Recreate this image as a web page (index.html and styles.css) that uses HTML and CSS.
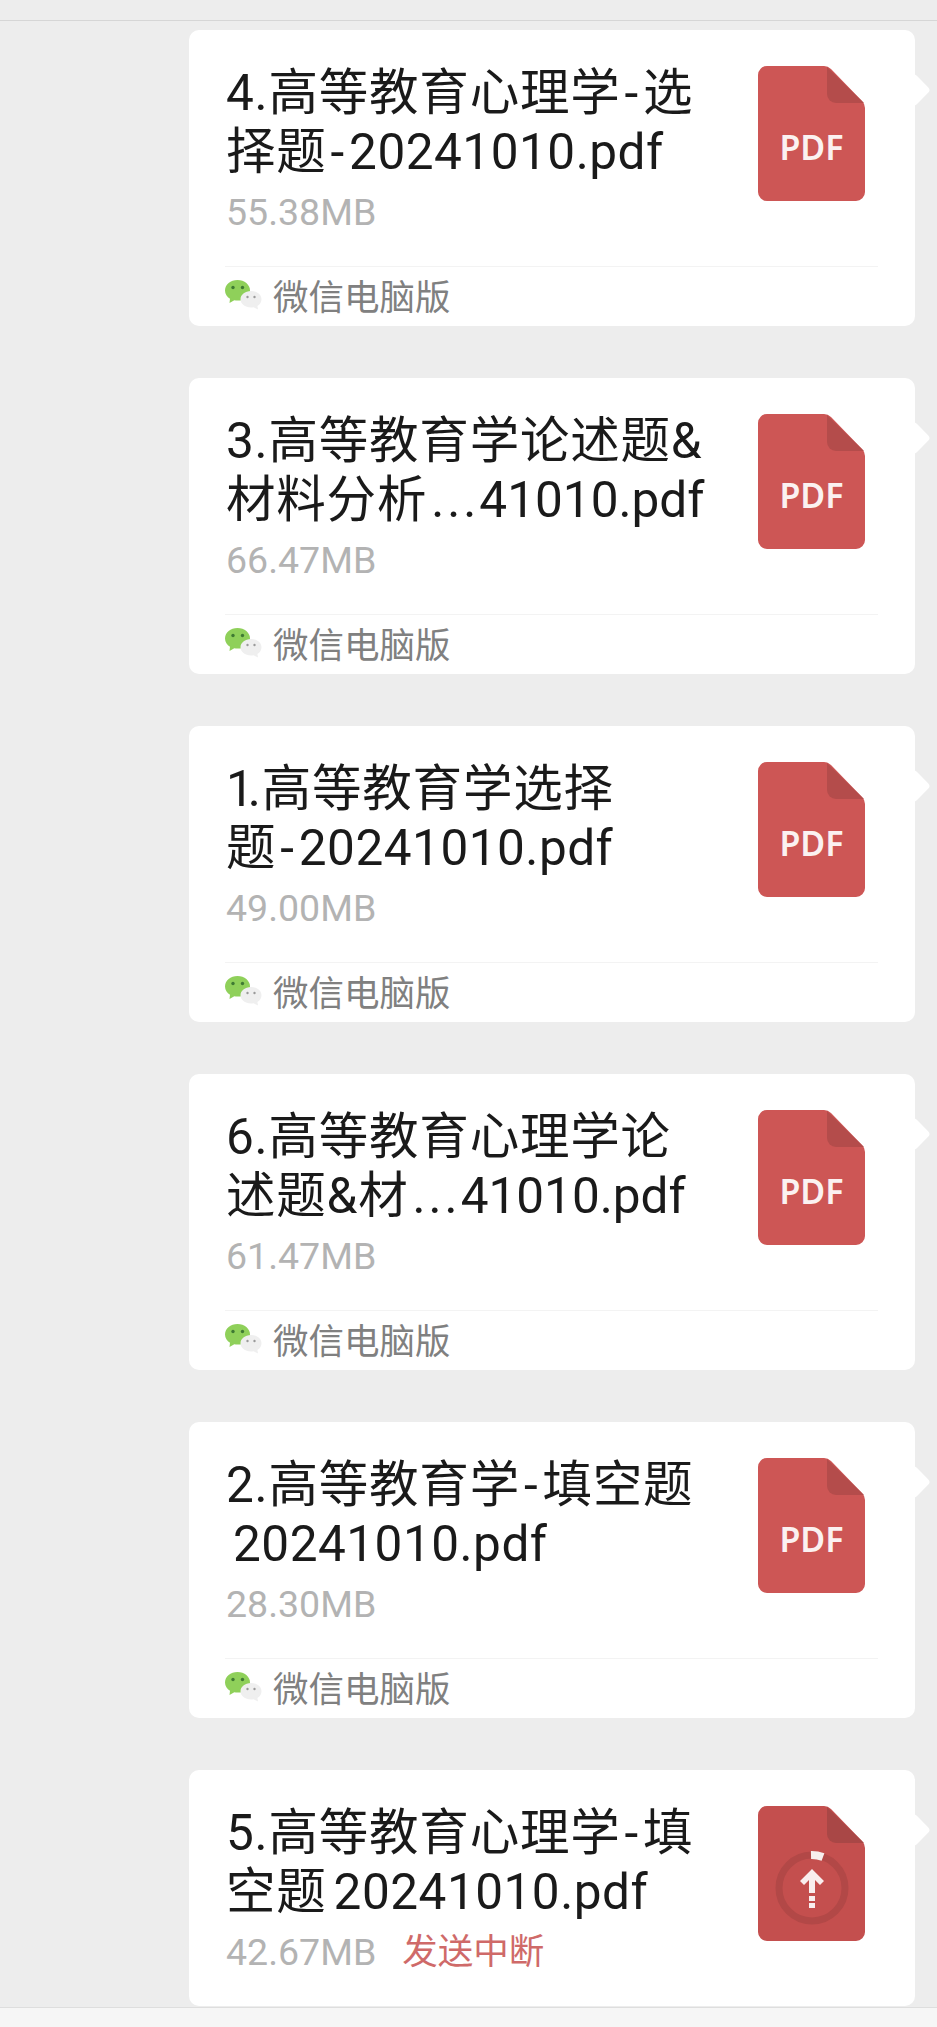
FILE: index.html
```html
<!DOCTYPE html>
<html lang="zh-CN">
<head>
    <meta charset="UTF-8">
    <meta name="viewport" content="width=device-width, initial-scale=1.0">
    <title>文件消息</title>
    <link rel="stylesheet" href="styles.css">
</head>
<body>
    <svg class="icon-defs" aria-hidden="true">
        <symbol id="doc-pdf" viewBox="0 0 107 135">
            <path d="M9 0H66q4 0 7 3L104 35q3 3 3 7V126a9 9 0 0 1-9 9H9a9 9 0 0 1-9-9V9a9 9 0 0 1 9-9Z" fill="#cd5655"/>
            <path d="M69 1 106 37H78a9 9 0 0 1-9-9Z" fill="#b44c4b"/>
        </symbol>
        <symbol id="wechat-logo" viewBox="0 0 38 32">
            <path d="M13.5 2C6.500 2 1 6.600 1 12.400c0 3.500 2 6.500 5 8.400L5.500 25l4.800-2.800c1 .2 2.100.4 3.200.4 7 0 12.500-4.600 12.500-10.200S20.500 2 13.500 2Z" fill="#8fd05a"/>
            <circle cx="9" cy="9.500" r="1.700" fill="#3f7a33"/>
            <circle cx="18.500" cy="9.500" r="1.700" fill="#3f7a33"/>
            <path d="M27 13c-6 0-10.500 3.700-10.500 8.300S21 29.500 27 29.500c.9 0 1.800-.1 2.600-.3l4.400 2.300-.6-3.500c2.700-1.500 4.100-4 4.100-6.700C37.500 16.700 33 13 27 13Z" fill="#efefef"/>
            <circle cx="23.500" cy="19" r="1.200" fill="#9a9a9a"/>
            <circle cx="30.500" cy="19" r="1.200" fill="#9a9a9a"/>
        </symbol>
    </svg>

    <div class="top-bar"></div>

    <div class="message-list">
        <div class="file-card">
            <div class="file-main">
                <div class="file-info">
                    <div class="file-name">4.高等教育心理学<span class="dash">-</span>选<br>择题<span class="dash">-</span><span class="name-tail">20241010.pdf</span></div>
                    <div class="file-meta"><span class="file-size">55.38MB</span></div>
                </div>
                <div class="file-icon">
                    <svg width="107" height="135"><use href="#doc-pdf"/></svg>
                    <span class="pdf-label">PDF</span>
                </div>
            </div>
            <div class="file-source">
                <svg class="source-logo" width="38" height="32"><use href="#wechat-logo"/></svg>
                <span>微信电脑版</span>
            </div>
        </div>

        <div class="file-card">
            <div class="file-main">
                <div class="file-info">
                    <div class="file-name">3.高等教育学论述题&amp;<br>材料分析<span class="ellipsis">...</span><span class="short-tail">41010.pdf</span></div>
                    <div class="file-meta"><span class="file-size">66.47MB</span></div>
                </div>
                <div class="file-icon">
                    <svg width="107" height="135"><use href="#doc-pdf"/></svg>
                    <span class="pdf-label">PDF</span>
                </div>
            </div>
            <div class="file-source">
                <svg class="source-logo" width="38" height="32"><use href="#wechat-logo"/></svg>
                <span>微信电脑版</span>
            </div>
        </div>

        <div class="file-card">
            <div class="file-main">
                <div class="file-info">
                    <div class="file-name"><span class="narrow-one">1</span>.高等教育学选择<br>题<span class="dash">-</span><span class="name-tail">20241010.pdf</span></div>
                    <div class="file-meta"><span class="file-size">49.00MB</span></div>
                </div>
                <div class="file-icon">
                    <svg width="107" height="135"><use href="#doc-pdf"/></svg>
                    <span class="pdf-label">PDF</span>
                </div>
            </div>
            <div class="file-source">
                <svg class="source-logo" width="38" height="32"><use href="#wechat-logo"/></svg>
                <span>微信电脑版</span>
            </div>
        </div>

        <div class="file-card">
            <div class="file-main">
                <div class="file-info">
                    <div class="file-name">6.高等教育心理学论<br>述题&amp;材<span class="ellipsis">...</span><span class="short-tail">41010.pdf</span></div>
                    <div class="file-meta"><span class="file-size">61.47MB</span></div>
                </div>
                <div class="file-icon">
                    <svg width="107" height="135"><use href="#doc-pdf"/></svg>
                    <span class="pdf-label">PDF</span>
                </div>
            </div>
            <div class="file-source">
                <svg class="source-logo" width="38" height="32"><use href="#wechat-logo"/></svg>
                <span>微信电脑版</span>
            </div>
        </div>

        <div class="file-card">
            <div class="file-main">
                <div class="file-info">
                    <div class="file-name">2.高等教育学<span class="dash">-</span>填空题<br><span class="name-tail name-gap">20241010.pdf</span></div>
                    <div class="file-meta"><span class="file-size">28.30MB</span></div>
                </div>
                <div class="file-icon">
                    <svg width="107" height="135"><use href="#doc-pdf"/></svg>
                    <span class="pdf-label">PDF</span>
                </div>
            </div>
            <div class="file-source">
                <svg class="source-logo" width="38" height="32"><use href="#wechat-logo"/></svg>
                <span>微信电脑版</span>
            </div>
        </div>

        <div class="file-card">
            <div class="file-main">
                <div class="file-info">
                    <div class="file-name">5.高等教育心理学<span class="dash">-</span>填<br>空题<span class="name-tail name-gap">20241010.pdf</span></div>
                    <div class="file-meta">
                        <span class="file-size">42.67MB</span>
                        <span class="file-failed">发送中断</span>
                    </div>
                </div>
                <div class="file-icon">
                    <svg width="107" height="135" viewBox="0 0 107 135">
                        <path d="M9 0H66q4 0 7 3L104 35q3 3 3 7V126a9 9 0 0 1-9 9H9a9 9 0 0 1-9-9V9a9 9 0 0 1 9-9Z" fill="#c44f4e"/>
                        <path d="M69 1 106 37H78a9 9 0 0 1-9-9Z" fill="#a94746"/>
                        <circle cx="54" cy="82" r="33" fill="none" stroke="#b24847" stroke-width="7"/>
                        <path d="M53 49A33 33 0 0 1 65 51" fill="none" stroke="#f7eeee" stroke-width="8"/>
                        <path d="M54 63 42 75 46 79 51 74V87H57V74L62 79 66 75Z" fill="#f9eeee"/>
                        <rect x="51" y="90" width="6" height="5" fill="#f9eeee"/>
                        <rect x="51" y="97" width="6" height="5" fill="#f9eeee"/>
                    </svg>
                </div>
            </div>
        </div>
    </div>

    <div class="bottom-bar"></div>
</body>
</html>
```

FILE: styles.css
```css
html, body {
    margin: 0;
    height: 100%;
}
body {
    display: flex;
    flex-direction: column;
    background-color: #ededed;
    font-family: Roboto, "Noto Sans CJK SC", sans-serif;
    overflow: hidden;
}
.icon-defs {
    width: 0;
    height: 0;
    position: absolute;
}
.top-bar {
    height: 20px;
    flex-shrink: 0;
    border-bottom: 1px solid #d6d6d6;
}
.message-list {
    display: flex;
    flex-direction: column;
    gap: 52px;
    padding: 9px 22px 0 189px;
}
.file-card {
    position: relative;
    background: #fff;
    border-radius: 10px;
}
/* bubble tail */
.file-card::after {
    content: "";
    position: absolute;
    top: 48px;
    right: -11px;
    width: 24px;
    height: 24px;
    background: #fff;
    border-radius: 4px;
    transform: rotate(45deg);
}
.file-main {
    display: flex;
    justify-content: space-between;
    padding: 36px 50px 0 37px;
    height: 200px;
}
.file-name {
    margin-top: -2px;
    font-size: 49.5px;
    letter-spacing: 0.8px;
    line-height: 59px;
    color: #1a1a1a;
    white-space: nowrap;
}
.dash {
    margin: 0 4px;
}
.ellipsis {
    margin-left: 4px;
    letter-spacing: 3px;
}
.narrow-one {
    letter-spacing: -6px;
}
.name-tail {
    letter-spacing: 0.5px;
}
.short-tail {
    letter-spacing: 0;
}
.name-gap {
    margin-left: 7px;
}
.file-meta {
    display: flex;
    gap: 27px;
    align-items: center;
    margin-top: 8px;
    font-size: 37.5px;
    line-height: 44px;
}
.file-size {
    color: #b3b3b3;
}
.file-failed {
    font-size: 35.5px;
    color: #cf6a69;
    margin-left: -1px;
}
.file-icon {
    position: relative;
    width: 107px;
    height: 135px;
}
.pdf-label {
    position: absolute;
    left: 0;
    right: 0;
    top: 61px;
    text-align: center;
    font-family: "Noto Sans", sans-serif;
    font-weight: 600;
    font-size: 34px;
    line-height: 40px;
    color: #fbf1f1;
}
.file-source {
    display: flex;
    align-items: center;
    gap: 11px;
    height: 60px;
    margin: 0 37px 0 36px;
    padding-bottom: 5px;
    border-top: 1px solid #f3f3f3;
    box-sizing: border-box;
    font-size: 35.5px;
    color: #808080;
}
.source-logo {
    margin-left: -1px;
}
.bottom-bar {
    flex: 1;
    margin-top: 1px;
    border-top: 1px solid #dedede;
    background: #f6f6f6;
}
```
